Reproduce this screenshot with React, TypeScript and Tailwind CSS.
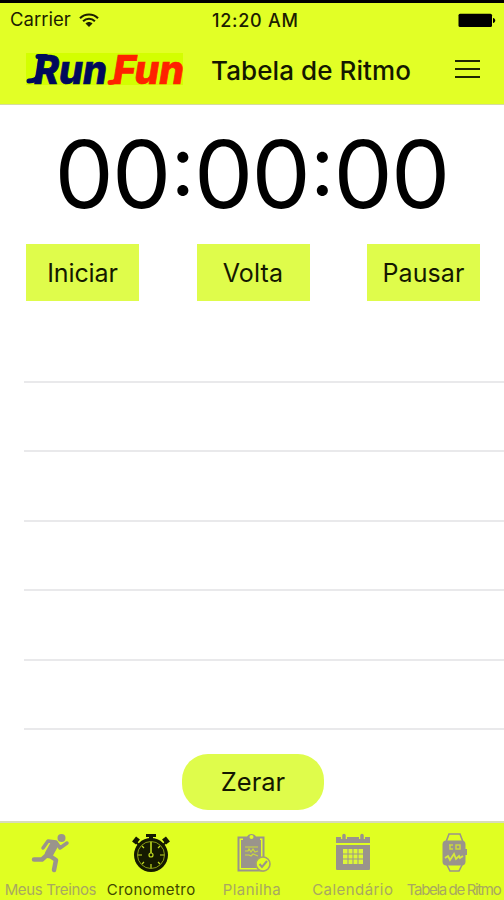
import type { ReactNode } from "react";

function Wifi() {
  return (
    <svg width="20" height="15" viewBox="0 0 20 15" fill="none" stroke="#1c2000" strokeWidth="2.1" className="block">
      <path d="M1 5.2C6 .2 14 .2 19 5.2" />
      <path d="M4.1 8.2c3.4-3.3 8.4-3.3 11.8 0" />
      <path d="M6.5 10.500c2-2 5-2 7 0L10 14z" fill="#1c2000" stroke="none" />
    </svg>
  );
}

function Battery() {
  return (
    <svg width="40" height="15" viewBox="0 0 40 15" className="block">
      <rect x="1.500" y="0.800" width="33.500" height="13.200" rx="1.500" fill="#000" />
      <path d="M36 5c3 .5 3 4.500 0 5z" fill="#000" />
    </svg>
  );
}

function Logo() {
  return (
    <svg width="158" height="44" viewBox="0 -5 158 44" overflow="visible" className="block shrink-0">
      <rect x="0" y="1" width="157" height="32" fill="#d3ff00" />
      <g fontFamily="Inter, sans-serif" fontWeight="800" fontStyle="italic" fontSize="40">
        <text x="8" y="32" textLength="73" lengthAdjust="spacingAndGlyphs" fill="#000a5c" stroke="#000a5c" strokeWidth="0.700">Run</text>
        <text x="87" y="32" textLength="71" lengthAdjust="spacingAndGlyphs" fill="#ff2200" stroke="#ff2200" strokeWidth="0.700">Fun</text>
      </g>
      <path d="M12 4.500h8M14.500 8C13 25 13 29 3 29" stroke="#000a5c" strokeWidth="5" strokeLinecap="round" fill="none" />
      <path d="M94 17C92 27 91 30.500 84 30.500" stroke="#ff2200" strokeWidth="5" strokeLinecap="round" fill="none" />
    </svg>
  );
}

function Runner() {
  return (
    <svg width="40" height="40" viewBox="0 0 40 40" fill="none" stroke="#9a948c" strokeLinejoin="round" strokeLinecap="round">
      <circle cx="31.500" cy="5" r="4" fill="#9a948c" stroke="none" />
      <path d="M13 15l5-7 8 1 4 6 7-5" strokeWidth="3.500" />
      <path d="M24 12l-5 9" strokeWidth="8.500" />
      <path d="M17 22l-5 4.500H4M20 23l6 4-2 10" strokeWidth="4.500" />
    </svg>
  );
}

function Stopwatch() {
  return (
    <svg width="40" height="40" viewBox="0 0 40 40" fill="none">
      <path d="M15 1h10v3h-3v3h-4V4h-3z" fill="#151a00" />
      <path d="M3 10l4-5M33 5l4 5" stroke="#151a00" strokeWidth="5" />
      <path d="M5 9l4 4M35 9l-4 4" stroke="#151a00" strokeWidth="2" />
      <circle cx="20" cy="22" r="17" fill="#151a00" />
      <circle cx="20" cy="22" r="13.500" stroke="#8a9c14" strokeWidth="1" />
      <path d="M20 31v4M7 22h4M29 22h4M11 13l2 2M29 13l-2 2M11 31l2-2M29 31l-2-2" stroke="#c3dc20" strokeWidth="1.200" />
      <path d="M20 9v11" stroke="#c3dc20" strokeWidth="1.600" />
      <circle cx="20" cy="22" r="2" stroke="#c3dc20" strokeWidth="1.200" />
    </svg>
  );
}

function Clipboard() {
  return (
    <svg width="40" height="40" viewBox="0 0 40 40" fill="none">
      <path d="M6.500 4.500h25v33h-25z" stroke="#9a948c" strokeWidth="2" />
      <path d="M9 7h20v28H9z" fill="#9a948c" />
      <path d="M11 8V4h4c1-4 8-4 9 0h4v4z" fill="#9a948c" />
      <circle cx="19.500" cy="4" r="2" fill="#e0ff22" />
      <path d="M13 14h13M13 18h3l1-2 2 3 2-3 2 3 3-1M13 22h4l2 1 2-2 5 2" stroke="#cbd83e" strokeWidth="1.200" />
      <circle cx="31" cy="31" r="7" fill="#e0ff22" stroke="#a5a073" strokeWidth="1.600" />
      <path d="M27.500 31l2.500 3 5-6" stroke="#9a948c" strokeWidth="2" />
    </svg>
  );
}

function Calendar() {
  return (
    <svg width="40" height="40" viewBox="0 0 40 40" fill="none">
      <path d="M3 4h34v6H3zM3 12h34v24q0 1-1 1H4q-1 0-1-1z" fill="#9a948c" />
      <path d="M11 6V2M29 6V2" stroke="#e0ff22" strokeWidth="6" />
      <path d="M11 6V2.500M29 6V2.500" stroke="#9a948c" strokeWidth="3.500" strokeLinecap="round" />
      <path d="M10 16h20v15H10z" fill="#dcf638" />
      <path d="M15 16v15M20 16v15M25 16v15M10 21h20M10 26h20" stroke="#9a948c" strokeWidth="1" />
    </svg>
  );
}

function Watch() {
  return (
    <svg width="40" height="40" viewBox="0 0 40 40" fill="none">
      <path d="M12 9l3-8h11l3 8M12 30l4 8h9l4-8" stroke="#9a948c" strokeWidth="1.600" />
      <rect x="8.500" y="7.500" width="23" height="25" rx="4" fill="#9a948c" />
      <path d="M31 16h2v6h-2z" fill="#9a948c" />
      <path d="M15 12h4M16 12v4h3M22 12h4v4h-4z" stroke="#cbd83e" strokeWidth="1.500" />
      <path d="M11 25l3-2 2 4 4-6 2 5 3-3 1 2 3-2" stroke="#d5e93a" strokeWidth="1.800" />
    </svg>
  );
}

function Tab({ icon, children, className }: { icon: ReactNode; children: ReactNode; className: string }) {
  return (
    <div className="flex w-[100.800px] flex-col items-center pt-[10px]">
      {icon}
      <span className={`mt-[8px] whitespace-nowrap text-[15px] leading-[18px] ${className}`}>{children}</span>
    </div>
  );
}

function LapButton({ children, className }: { children: ReactNode; className: string }) {
  return (
    <button className={`h-[57px] w-[113px] bg-[#dffc4b] pt-[2px] text-[25px] text-[#141800] ${className}`}>{children}</button>
  );
}

export default function App() {
  return (
    <div className="flex h-[900px] w-[504px] flex-col overflow-hidden bg-white font-['Inter',sans-serif]">
      <header className="flex h-[105px] shrink-0 flex-col border-b border-[#d5dca0] border-t-[3px] border-t-black bg-[#e2ff26]">
        <div className="flex h-[34px] items-center pl-[10px] pr-[7px] text-[#1c2000]">
          <div className="flex w-[202px] items-center gap-[8px]">
            <span className="text-[18.500px]">Carrier</span>
            <Wifi />
          </div>
          <span className="w-[90px] whitespace-nowrap text-[18px] font-medium tracking-[0.750px]">12:20 AM</span>
          <div className="ml-auto">
            <Battery />
          </div>
        </div>
        <div className="flex h-[64px] items-center pl-[26px] pr-[24px]">
          <Logo />
          <h1 className="ml-[27px] mt-[2px] whitespace-nowrap text-[26px] font-medium tracking-[0.080px] text-[#141800]">Tabela de Ritmo</h1>
          <div className="ml-auto flex w-[25px] flex-col gap-[6px]">
            <i className="h-[2px] bg-[#202600]" />
            <i className="h-[2px] bg-[#202600]" />
            <i className="h-[2px] bg-[#202600]" />
          </div>
        </div>
      </header>

      <main className="flex flex-1 flex-col">
        <div className="flex h-[139px] justify-center pl-px pt-[14px] text-[94px] leading-[110px] text-black">
          {"00:00:00".split("").map((c, i) =>
            c === ":" ? (
              <span key={i} className="flex w-[24.500px] justify-center text-[84px] leading-[92px]">{c}</span>
            ) : (
              <span key={i} className="flex w-[57.500px] justify-center">{c}</span>
            ),
          )}
        </div>
        <div className="flex justify-between pl-[26px] pr-[24px]">
          <LapButton className="tracking-[-0.100px]">Iniciar</LapButton>
          <LapButton className="tracking-[0.200px]">Volta</LapButton>
          <LapButton className="tracking-[0.100px]">Pausar</LapButton>
        </div>
        <div className="ml-[24px] mt-[12px] flex flex-col">
          {[0, 1, 2, 3, 4, 5].map((row) => (
            <div key={row} className="h-[69.500px] border-b-2 border-[#e9e9eb]" />
          ))}
        </div>
        <button className="ml-[182px] mt-[24px] h-[56px] w-[142px] rounded-[26px] bg-[#dffc4b] text-[25.500px] text-[#141800]">
          Zerar
        </button>
      </main>

      <nav className="flex h-[79px] shrink-0 border-t-2 border-[#d8dcb8] bg-[#e0ff22]">
        <Tab icon={<Runner />} className="tracking-[-0.350px] text-[#a8a860]">Meus Treinos</Tab>
        <Tab icon={<Stopwatch />} className="tracking-[0.450px] text-[#3f4800]">Cronometro</Tab>
        <Tab icon={<Clipboard />} className="tracking-[0.400px] text-[#a8a860]">Planilha</Tab>
        <Tab icon={<Calendar />} className="tracking-[0.450px] text-[#a8a860]">Calendário</Tab>
        <Tab icon={<Watch />} className="tracking-[-1.350px] text-[#a8a860]">Tabela de Ritmo</Tab>
      </nav>
    </div>
  );
}
